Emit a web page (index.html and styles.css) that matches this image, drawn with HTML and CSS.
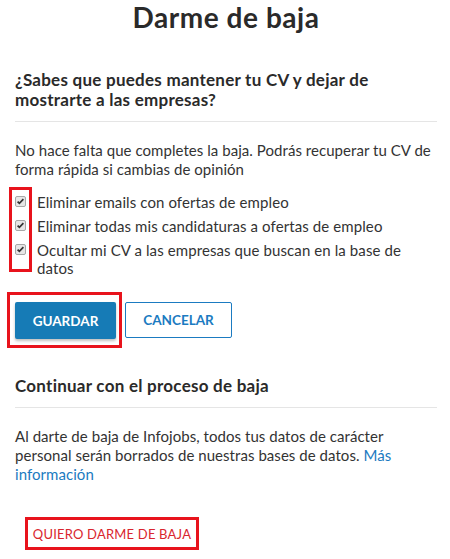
FILE: index.html
```html
<!DOCTYPE html>
<html lang="es">
<head>
<meta charset="utf-8">
<title>Darme de baja</title>
<link rel="stylesheet" href="styles.css">
</head>
<body>
<main class="page">
  <h1 class="title">Darme de baja</h1>

  <section class="block">
    <h2 class="block-title">¿Sabes que puedes mantener tu CV y dejar de mostrarte a las empresas?</h2>
    <hr class="divider">
    <p class="text">No hace falta que completes la baja. Podrás recuperar tu CV de forma rápida si cambias de opinión</p>
    <div class="options-wrap">
      <span class="mark mark-checks"></span>
      <ul class="options">
        <li class="option"><span class="check"><svg viewBox="0 0 11 11" width="11" height="11"><path d="M2.6 5.6 L4.4 7.4 L8.4 3.2" fill="none" stroke="#333" stroke-width="1.7"/></svg></span><span class="option-label">Eliminar emails con ofertas de empleo</span></li>
        <li class="option"><span class="check"><svg viewBox="0 0 11 11" width="11" height="11"><path d="M2.6 5.6 L4.4 7.4 L8.4 3.2" fill="none" stroke="#333" stroke-width="1.7"/></svg></span><span class="option-label">Eliminar todas mis candidaturas a ofertas de empleo</span></li>
        <li class="option"><span class="check"><svg viewBox="0 0 11 11" width="11" height="11"><path d="M2.6 5.6 L4.4 7.4 L8.4 3.2" fill="none" stroke="#333" stroke-width="1.7"/></svg></span><span class="option-label">Ocultar mi CV a las empresas que buscan en la base de datos</span></li>
      </ul>
    </div>
    <div class="actions">
      <span class="mark-box"><button class="btn btn-primary" type="button">GUARDAR</button></span>
      <button class="btn btn-secondary" type="button">CANCELAR</button>
    </div>
  </section>

  <section class="block block-second">
    <h2 class="block-title">Continuar con el proceso de baja</h2>
    <hr class="divider">
    <p class="text">Al darte de baja de Infojobs, todos tus datos de carácter personal serán borrados de nuestras bases de datos. <a class="link" href="#">Más información</a></p>
    <div class="leave">
      <button class="btn-leave" type="button">QUIERO DARME DE BAJA</button>
    </div>
  </section>
</main>
</body>
</html>
```
FILE: styles.css
```css
* { box-sizing: border-box; }
html, body { margin: 0; padding: 0; background: #fff; }
body {
  font-family: "Lato", "Liberation Sans", sans-serif;
  color: #333;
  width: 450px;
}
.page { padding: 0 13px 0 15px; }

.title {
  margin: 0;
  font-size: 28px;
  line-height: 34px;
  font-weight: 700;
  letter-spacing: 0.55px;
  text-align: center;
  color: #2a2a2a;
}

.block-title {
  margin: 36px 0 0;
  font-size: 17px;
  line-height: 20px;
  font-weight: 700;
  letter-spacing: 0.25px;
  color: #2a2a2a;
}

.divider {
  margin: 11px 0 0;
  border: 0;
  border-top: 1px solid #e5e5e5;
}

.text {
  margin: 19px 0 0;
  font-size: 15px;
  line-height: 19px;
  letter-spacing: 0.05px;
}

.link { color: #1b7bc1; text-decoration: none; }

.options-wrap { position: relative; margin-top: 14px; }
.mark-checks {
  position: absolute;
  left: -6px; top: -6px;
  width: 23px; height: 85px;
  border: 3px solid #e8131c;
}
.options { list-style: none; margin: 0; padding: 0 6px 0 0; display: flex; flex-direction: column; gap: 6px; }
.option { display: flex; align-items: flex-start; gap: 11px; font-size: 15px; line-height: 18px; letter-spacing: 0.1px; }
.check {
  flex: none;
  width: 11px; height: 11px;
  margin-top: 3px;
  border: 1px solid #a8a8a8;
  border-radius: 2px;
  background: #e6e6e6;
  display: flex;
}
.check svg { display: block; margin: -1px; }

.actions { display: flex; align-items: center; gap: 3px; margin-top: 15px; margin-left: -8px; }
.mark-box {
  display: inline-flex;
  border: 3px solid #e8131c;
  padding: 7px 3px 6px 5px;
}
.btn {
  font-family: inherit;
  font-size: 13.5px;
  font-weight: 700;
  letter-spacing: 0;
  height: 37px;
  border-radius: 2px;
  cursor: pointer;
}
.btn-primary {
  width: 101px;
  background: #167bb6;
  border: 0;
  color: #fff;
  box-shadow: 0 2px 3px rgba(0,0,0,0.25);
}
.btn-secondary {
  width: 107px;
  height: 36px;
  background: #fff;
  border: 1px solid #1b7bc1;
  color: #1b7bc1;
}

.block-second .block-title { margin-top: 28px; }

.leave { margin-top: 33px; padding-left: 10px; }
.btn-leave {
  font-family: inherit;
  font-size: 13px;
  font-weight: 400;
  letter-spacing: 0.2px;
  color: #d9252e;
  background: #fff;
  border: 3px solid #e8131c;
  width: 174px;
  height: 33px;
  padding: 0;
}
```
